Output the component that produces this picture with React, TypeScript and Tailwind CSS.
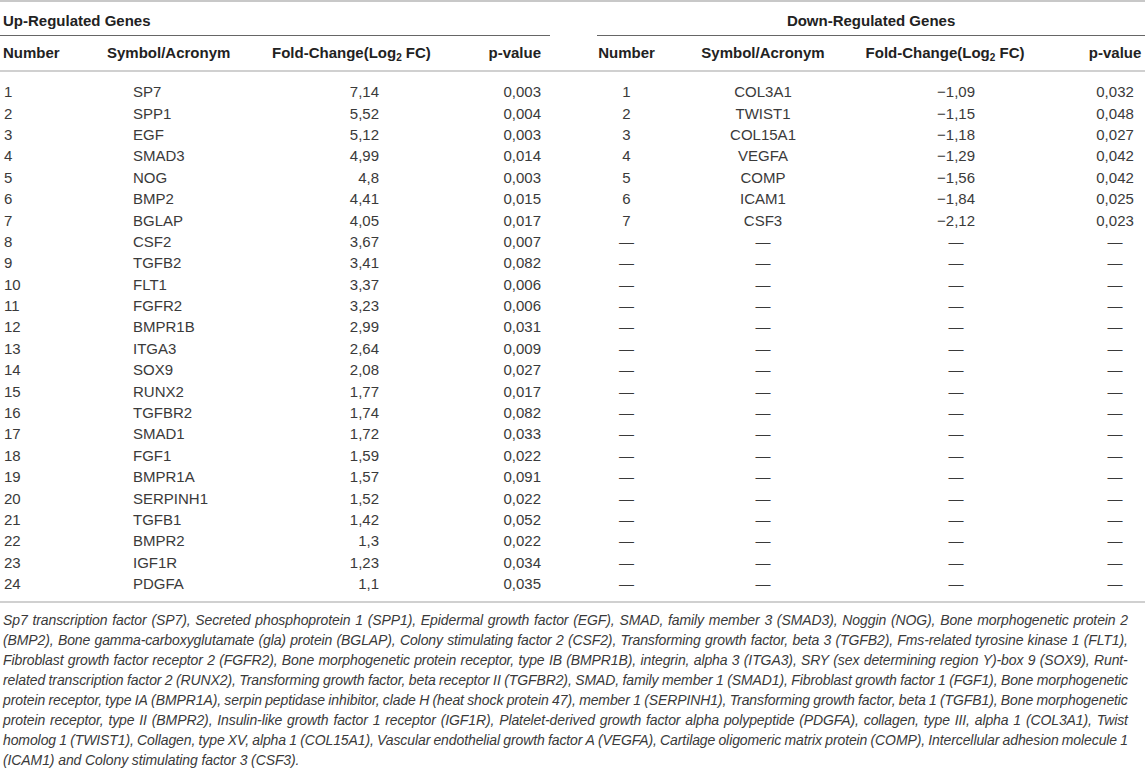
import React from "react";

const upGenes: [string, string, string][] = [
  ["SP7", "7,14", "0,003"],
  ["SPP1", "5,52", "0,004"],
  ["EGF", "5,12", "0,003"],
  ["SMAD3", "4,99", "0,014"],
  ["NOG", "4,8", "0,003"],
  ["BMP2", "4,41", "0,015"],
  ["BGLAP", "4,05", "0,017"],
  ["CSF2", "3,67", "0,007"],
  ["TGFB2", "3,41", "0,082"],
  ["FLT1", "3,37", "0,006"],
  ["FGFR2", "3,23", "0,006"],
  ["BMPR1B", "2,99", "0,031"],
  ["ITGA3", "2,64", "0,009"],
  ["SOX9", "2,08", "0,027"],
  ["RUNX2", "1,77", "0,017"],
  ["TGFBR2", "1,74", "0,082"],
  ["SMAD1", "1,72", "0,033"],
  ["FGF1", "1,59", "0,022"],
  ["BMPR1A", "1,57", "0,091"],
  ["SERPINH1", "1,52", "0,022"],
  ["TGFB1", "1,42", "0,052"],
  ["BMPR2", "1,3", "0,022"],
  ["IGF1R", "1,23", "0,034"],
  ["PDGFA", "1,1", "0,035"],
];

const downGenes: [string, string, string][] = [
  ["COL3A1", "−1,09", "0,032"],
  ["TWIST1", "−1,15", "0,048"],
  ["COL15A1", "−1,18", "0,027"],
  ["VEGFA", "−1,29", "0,042"],
  ["COMP", "−1,56", "0,042"],
  ["ICAM1", "−1,84", "0,025"],
  ["CSF3", "−2,12", "0,023"],
];

// footnote lines broken as in the printed table
const footLines = [
  "Sp7 transcription factor (SP7), Secreted phosphoprotein 1 (SPP1), Epidermal growth factor (EGF), SMAD, family member 3 (SMAD3), Noggin (NOG), Bone morphogenetic protein 2",
  "(BMP2), Bone gamma-carboxyglutamate (gla) protein (BGLAP), Colony stimulating factor 2 (CSF2), Transforming growth factor, beta 3 (TGFB2), Fms-related tyrosine kinase 1 (FLT1),",
  "Fibroblast growth factor receptor 2 (FGFR2), Bone morphogenetic protein receptor, type IB (BMPR1B), integrin, alpha 3 (ITGA3), SRY (sex determining region Y)-box 9 (SOX9), Runt-",
  "related transcription factor 2 (RUNX2), Transforming growth factor, beta receptor II (TGFBR2), SMAD, family member 1 (SMAD1), Fibroblast growth factor 1 (FGF1), Bone morphogenetic",
  "protein receptor, type IA (BMPR1A), serpin peptidase inhibitor, clade H (heat shock protein 47), member 1 (SERPINH1), Transforming growth factor, beta 1 (TGFB1), Bone morphogenetic",
  "protein receptor, type II (BMPR2), Insulin-like growth factor 1 receptor (IGF1R), Platelet-derived growth factor alpha polypeptide (PDGFA), collagen, type III, alpha 1 (COL3A1), Twist",
  "homolog 1 (TWIST1), Collagen, type XV, alpha 1 (COL15A1), Vascular endothelial growth factor A (VEGFA), Cartilage oligomeric matrix protein (COMP), Intercellular adhesion molecule 1",
];
const lastFootLine = "(ICAM1) and Colony stimulating factor 3 (CSF3).";

const FoldChangeHeader = () => (
  <>
    Fold-Change(Log<sub className="text-[10px] align-baseline relative top-[3px]">2</sub> FC)
  </>
);

export default function App() {
  return (
    <div className="w-[1145px] bg-white text-[15px] text-[#3a3a3a] font-['Liberation_Sans',Arial,sans-serif]">
      <table className="w-[1145px] table-fixed border-collapse">
        <colgroup>
          <col className="w-[107px]" />
          <col className="w-[153px]" />
          <col className="w-[200px]" />
          <col className="w-[90px]" />
          <col className="w-[47px]" />
          <col className="w-[59px]" />
          <col className="w-[194px]" />
          <col className="w-[190px]" />
          <col className="w-[105px]" />
        </colgroup>
        <thead>
          <tr className="h-[34px] border-t-2 border-[#c8c8c8] text-[#222]">
            <th colSpan={4} className="text-left pl-[3px] pt-[5px] font-bold">
              Up-Regulated Genes
            </th>
            <th />
            <th colSpan={4} className="text-center pt-[5px] font-bold">
              Down-Regulated Genes
            </th>
          </tr>
          <tr className="h-[36px] text-[#222] border-b-2 border-[#d0d0d0]">
            <th className="text-left pl-[3px] font-bold border-t border-[#666]">Number</th>
            <th className="text-left font-bold border-t border-[#666]">Symbol/Acronym</th>
            <th className="text-left pl-[12px] font-bold whitespace-nowrap border-t border-[#666]">
              <FoldChangeHeader />
            </th>
            <th className="text-right pr-[9px] font-bold border-t border-[#666]">p-value</th>
            <th />
            <th className="text-center font-bold border-t border-[#666]">Number</th>
            <th className="text-center pl-[20px] font-bold border-t border-[#666]">Symbol/Acronym</th>
            <th className="text-center font-bold whitespace-nowrap border-t border-[#666]">
              <FoldChangeHeader />
            </th>
            <th className="text-center pl-[45px] font-bold border-t border-[#666]">p-value</th>
          </tr>
        </thead>
        <tbody className="border-b-2 border-[#d0d0d0]">
          <tr className="h-[10px]">
            <td colSpan={9} />
          </tr>
          {upGenes.map((g, i) => {
            const d = downGenes[i];
            return (
              <tr key={i} className="h-[21.4px] leading-none">
                <td className="pl-[4px]">{i + 1}</td>
                <td className="pl-[26px]">{g[0]}</td>
                <td className="text-right pr-[81px]">{g[1]}</td>
                <td className="text-right pr-[9px]">{g[2]}</td>
                <td />
                <td className="text-center">{d ? i + 1 : "—"}</td>
                <td className="text-center pl-[20px]">{d ? d[0] : "—"}</td>
                <td className="text-center pl-[22px]">{d ? d[1] : "—"}</td>
                <td className="text-center pl-[45px]">{d ? d[2] : "—"}</td>
              </tr>
            );
          })}
          <tr className="h-[8px]">
            <td colSpan={9} />
          </tr>
        </tbody>
      </table>
      <div className="pt-[7px] pl-[3px] italic text-[14px] tracking-[-0.1px] leading-[20px]">
        {footLines.map((l, i) => (
          <div key={i} className="w-[1125px] flex justify-between whitespace-nowrap">
            {l.split(" ").map((w, j) => (
              <span key={j}>{w}</span>
            ))}
          </div>
        ))}
        <div className="whitespace-nowrap">{lastFootLine}</div>
      </div>
    </div>
  );
}
